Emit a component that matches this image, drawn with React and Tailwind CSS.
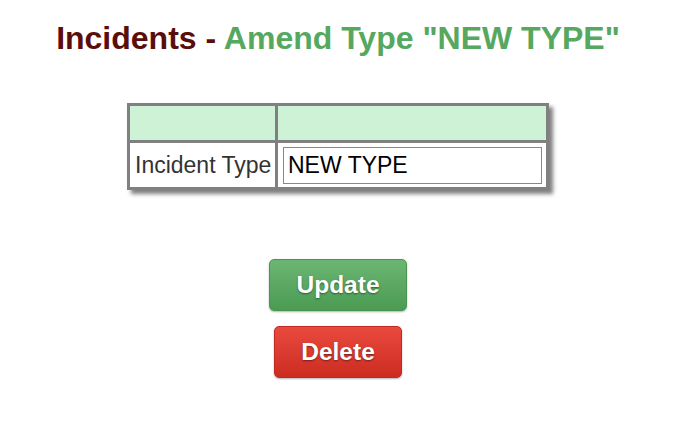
import React from "react";

export default function App() {
  return (
    <div className="w-[676px] min-h-[424px] bg-white flex flex-col items-center font-['Liberation_Sans',Arial,sans-serif]">
      <h1 className="mt-[22px] text-[32px] leading-none font-bold whitespace-nowrap">
        <span className="text-[#5a0e0a]">Incidents - </span>
        <span className="text-[#55a85e]">Amend Type "NEW TYPE"</span>
      </h1>

      {/* details table */}
      <div className="mt-[49px] grid grid-cols-[145px_268px] gap-[3px] p-[3px] bg-[#808080] shadow-[4px_4px_4px_rgba(0,0,0,0.5)]">
        <div className="h-[34px] bg-[#cef2d6]"></div>
        <div className="h-[34px] bg-[#cef2d6]"></div>
        <div className="h-[44px] bg-white flex items-center pl-[5px] text-[23px] text-[#333] whitespace-nowrap">
          Incident Type
        </div>
        <div className="h-[44px] bg-white pl-[5px] pr-[4px] pt-[4px]">
          <input
            type="text"
            defaultValue="NEW TYPE"
            className="w-[259px] h-[37px] border border-[#5aa85e] px-[4px] text-[23px] text-black outline-none bg-white"
          />
        </div>
      </div>

      <div className="mt-[69px] flex flex-col items-center gap-[15px]">
        <button className="h-[52px] w-[138px] rounded-[5px] border border-[#4a9450] bg-gradient-to-b from-[#6bb673] to-[#4b9b53] text-white text-[24.5px] font-bold [text-shadow:0_1px_2px_rgba(0,0,0,0.45)] shadow-[0_1px_2px_rgba(0,0,0,0.3)]">
          Update
        </button>
        <button className="h-[52px] w-[128px] rounded-[5px] border border-[#c02a20] bg-gradient-to-b from-[#ea4a3e] to-[#cc2b20] text-white text-[24.5px] font-bold [text-shadow:0_1px_2px_rgba(0,0,0,0.45)] shadow-[0_1px_2px_rgba(0,0,0,0.3)]">
          Delete
        </button>
      </div>
    </div>
  );
}
